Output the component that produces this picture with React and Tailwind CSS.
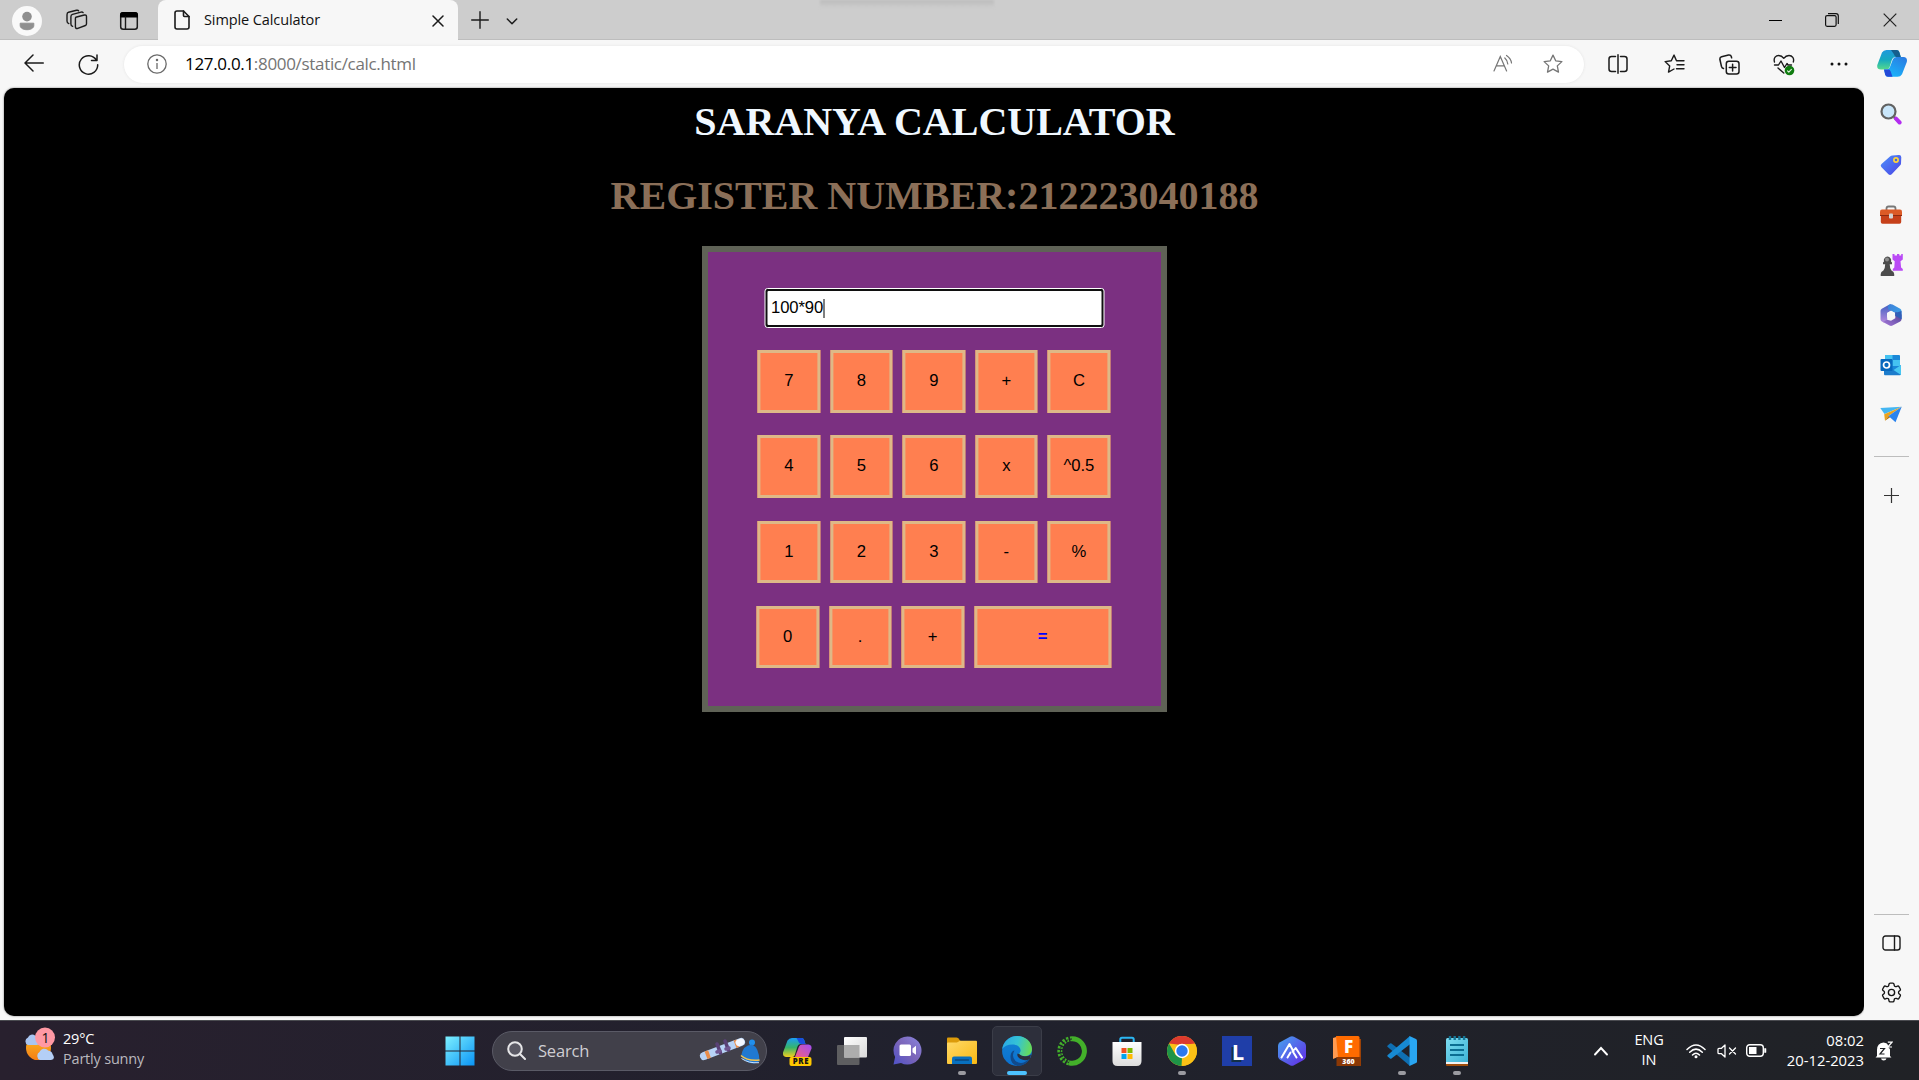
import React from "react";
import { HiOutlineCog6Tooth } from "react-icons/hi2";

const UI = "font-['Open_Sans','Noto_Sans',sans-serif]";

function Svg({ w, h, vb, className = "", children, ...rest }) {
  return (
    <svg width={w} height={h} viewBox={vb || `0 0 ${w} ${h}`} fill="none" className={`block shrink-0 ${className}`} {...rest}>
      {children}
    </svg>
  );
}

const line = { stroke: "#1b1b1b", strokeWidth: 1.4, strokeLinecap: "round", strokeLinejoin: "round" };

function Cell({ className, children }) {
  return <div className={`flex h-full shrink-0 items-center justify-center ${className}`}>{children}</div>;
}

function TabStrip() {
  return (
    <div className="flex h-10 w-full items-center bg-[#cdcdcd] shadow-[inset_0_-1px_0_#bdbdbd]">
      <Cell className="w-[54px]">
        <Svg w={30} h={30} className="mt-px">
          <circle cx="15" cy="15" r="15" fill="#f9f9f9" />
          <circle cx="15" cy="10.6" r="4.8" fill="#8f8f8f" />
          <path d="M8.2 17.2h13.6v2.3c0 2.6-3 4.2-6.8 4.2s-6.8-1.600-6.800-4.200z" fill="#8f8f8f" stroke="#8f8f8f" strokeLinejoin="round" />
        </Svg>
      </Cell>
      <Cell className="w-[46px]">
        <Svg w={22} h={22} {...line} strokeWidth="1.4" className="-ml-px">
          <path d="M9.800 8.200l8.500-2.200q2-.4 2.200 1.500v7.300q0 1.300-1.100 1.700l-7.600 2.900q-2.200.7-2.400-1.500v-8q0-1.300.4-1.700z" />
          <path d="M6.600 17.300q-1.700-.5-1.700-2.400V7.700q0-1.800 1.600-2.300l8.500-2.300q1.500-.3 2.100.5" />
          <path d="M2.800 14.600Q1 14 1 12V5.700q0-2 1.600-2.500L10.500 1.300q1.600-.4 2.100.5" />
        </Svg>
      </Cell>
      <Cell className="w-[58px]">
        <Svg w={20} h={20} className="mt-px">
          <rect x="1.700" y="1.700" width="16.600" height="16.600" rx="2.500" {...line} strokeWidth="1.500" />
          <path d="M1 6.500V4q0-3 3-3h12q3 0 3 3v2.500z" fill="#000" />
          <path d="M6.500 6v12" {...line} />
        </Svg>
      </Cell>
      <div className="flex h-10 w-[300px] items-center rounded-t-[8px] bg-[#f7f7f7] pl-4">
        <Svg w={16} h={20} {...line} strokeWidth="1.600">
          <path d="M3 1h6.500L15 6.500V17q0 2-2 2H3q-2 0-2-2V3q0-2 2-2z" />
          <path d="M9.500 1v4.500q0 1 1 1H15" />
        </Svg>
        <span className={`ml-[14px] w-[228px] whitespace-nowrap text-[14.500px] leading-5 tracking-[-0.1px] text-[#111] ${UI}`}>Simple Calculator</span>
        <Svg w={12} h={12} className="mt-px" {...line} strokeWidth="1.500">
          <path d="M1 1l10 10M11 1L1 11" />
        </Svg>
      </div>
      <Cell className="w-[43px]">
        <Svg w={18} h={18} {...line} strokeWidth="1.400">
          <path d="M9 .7v16.600M.7 9h16.600" />
        </Svg>
      </Cell>
      <Cell className="w-[21px]">
        <Svg w={12} h={7} className="mt-0.5" {...line} strokeWidth="1.500">
          <path d="M1.300 1L6 5.700 10.700 1" />
        </Svg>
      </Cell>
      <div className="flex h-full min-w-0 grow pl-[298px]">
        <div className="h-2 w-[174px] bg-linear-to-b from-[#bcbcbc] to-[#cdcdcd] blur-[1px]" />
      </div>
      <Cell className="w-[56px]">
        <div className="h-px w-[13px] bg-black" />
      </Cell>
      <Cell className="w-[58px]">
        <Svg w={14} h={14} stroke="#111" strokeWidth="1.200">
          <rect x=".6" y="2.600" width="10.500" height="10.700" rx="1.500" />
          <path d="M3 .6h8q2.300 0 2.300 2.300v8" />
        </Svg>
      </Cell>
      <Cell className="w-[58px]">
        <Svg w={14} h={14} stroke="#222" strokeWidth="1.200">
          <path d="M.7.7l12.600 12.600M13.300.7L.7 13.300" />
        </Svg>
      </Cell>
    </div>
  );
}

const starPath = "M10 1.100l2.700 5.700 6.200.8-4.600 4.300 1.200 6.200L10 15.100l-5.500 3 1.200-6.200L1.100 7.600l6.200-.8z";

function Toolbar() {
  return (
    <div className="flex h-12 w-full items-center bg-[#f7f7f7]">
      <Cell className="w-[68px]">
        <Svg w={20} h={18} {...line} strokeWidth="1.500" className="mt-[-2px]">
          <path d="M9 1L1 9l8 8M1.300 9H19.300" />
        </Svg>
      </Cell>
      <Cell className="w-[42px]">
        <Svg w={21} h={21} {...line} strokeWidth="1.500" className="-ml-px">
          <path d="M18.400 6.200A9.200 9.200 0 1 0 19.700 10.700M19 1v5.500h-5.500" />
        </Svg>
      </Cell>
      <div className="ml-[14px] flex h-[37px] w-[1460px] items-center rounded-full bg-white shadow-[0_0_3px_#e3e3e3]">
        <Cell className="w-[61px] pl-1">
          <Svg w={20} h={20} stroke="#6a6a6a" strokeWidth="1.300">
            <circle cx="10" cy="10" r="9.200" />
            <path d="M10 9v6" />
            <circle cx="10" cy="6" r="0.600" fill="#6a6a6a" />
          </Svg>
        </Cell>
        <span className={`w-[1289px] whitespace-nowrap text-[17px] leading-6 tracking-[-0.320px] text-[#747474] ${UI}`}>
          <span className="text-black">127.0.0.1</span>:8000/static/calc.html
        </span>
        <Cell className="w-[60px]">
          <Svg w={20} h={18} stroke="#757575" strokeWidth="1.200" strokeLinecap="round" className="ml-[-2px] mt-[-2px]">
            <path d="M1 17L7.300 2.500 13.600 17M3.400 11.800h7.900M11.800 4q2.700 2.300 3 6M13.500 1.500q4.500 3 5 7.500" />
          </Svg>
        </Cell>
        <Cell className="w-[38px]">
          <Svg w={20} h={20} stroke="#757575" strokeWidth="1.300" strokeLinejoin="round">
            <path d={starPath} />
          </Svg>
        </Cell>
      </div>
      <Cell className="ml-[6px] w-[56px]">
        <Svg w={20} h={20} {...line} strokeWidth="1.500">
          <path d="M7.500 2.500H3.500q-2.500 0-2.500 2.500v10q0 2.500 2.500 2.500h4M12.500 2.500h4q2.500 0 2.500 2.500v10q0 2.500-2.500 2.500h-4M10 .8v18.400" />
        </Svg>
      </Cell>
      <Cell className="w-[56px]">
        <Svg w={21} h={20} {...line} strokeWidth="1.400">
          <path d="M12.500 6.800l-2.500-5.700-2.700 5.700-6.200.8 4.600 4.300-1.200 6.200L10 15M12.500 6.800h7.500M13 10.800h7M12.500 14.800h7.500" />
        </Svg>
      </Cell>
      <Cell className="w-[54px]">
        <Svg w={21} h={21} {...line} strokeWidth="1.500">
          <rect x="7.300" y="7.300" width="12.700" height="12.700" rx="2.500" />
          <path d="M13.600 10.300v6.700M10.300 13.600h6.700M4.500 14.500q-1.500-.3-2-2L.9 5.500Q.6 3.400 2.600 2.800l6.900-1.700q2.300-.4 2.900 1.700l.2 1" />
        </Svg>
      </Cell>
      <Cell className="w-[56px]">
        <Svg w={22} h={22} {...line} strokeWidth="1.400" className="mt-px">
          <path d="M1.500 8C.2 3.800 3 1.500 5.700 1.500 8.500 1.500 10 3.200 10.800 4.300 11.600 3.200 13 1.500 16 1.500c3.200 0 5.500 3 4.300 6.500M1.500 11h4l2.500-4 3.500 6.500L14 9.500l1 1.500h3.500M5 14l5.800 5" />
          <circle cx="16.500" cy="16.500" r="4.800" fill="#107c10" stroke="none" />
          <path d="M14.500 16.800l1.300 1.300 2.600-2.800" stroke="#dff0df" strokeWidth="1.100" />
        </Svg>
      </Cell>
      <Cell className="w-[54px]">
        <Svg w={18} h={4}>
          <circle cx="2" cy="2" r="1.500" fill="#111" />
          <circle cx="9" cy="2" r="1.500" fill="#111" />
          <circle cx="16" cy="2" r="1.500" fill="#111" />
        </Svg>
      </Cell>
      <Cell className="w-[52px]">
        <Svg w={30} h={27} className="-mt-px">
          <defs>
            <linearGradient id="cpA" x1="0" y1="0" x2="0" y2="1">
              <stop stopColor="#1f98dc" /><stop offset=".5" stopColor="#16a9c0" /><stop offset="1" stopColor="#55d98c" />
            </linearGradient>
            <linearGradient id="cpB" x1="1" y1="0" x2=".3" y2="1">
              <stop stopColor="#2b78e0" /><stop offset="1" stopColor="#19b5fb" />
            </linearGradient>
          </defs>
          <path d="M5 2.500Q6.500 0 9.500 0h10q2.200 0 2.800 2l1.500 5h-5q-3 0-4 3l-2.300 7.500q-.8 2-2.800 2H4Q-.5 19.500.3 15z" fill="url(#cpA)" />
          <path d="M14 0h5.500q2.200 0 2.800 2l1.500 5h-4.500q-1.500 0-2.500-3z" fill="#155f8e" />
          <path d="M25 24.200q-1.500 2.500-4.500 2.500H11q-2.200 0-2.800-2L7 19.500h3q2 0 2.800-2l3-8q1-2.500 3.500-2.500H26.500q4.300.5 3.300 5z" fill="url(#cpB)" />
          <path d="M15.500 26.700H11q-2.200 0-2.800-2L7 19.500h4.500q1.500 0 2.200 2z" fill="#2349d8" />
        </Svg>
      </Cell>
    </div>
  );
}

function CalcKey({ children, wide, accent }) {
  return (
    <button
      type="button"
      className={`flex h-[62.5px] shrink-0 items-center justify-center border-[3px] border-[#deb887] bg-[#ff7f50] text-[16.67px] leading-none ${wide ? "w-[137.5px]" : "w-[62.5px]"} ${accent ? "font-bold text-[#0000ff]" : "text-black"}`}
    >
      {children}
    </button>
  );
}

function Page() {
  const rows = [
    ["7", "8", "9", "+", "C"],
    ["4", "5", "6", "x", "^0.5"],
    ["1", "2", "3", "-", "%"],
  ];
  return (
    <main className="ml-1 flex h-[928px] w-[1860px] shrink-0 flex-col items-center rounded-[10px] bg-black pt-[11px] pl-px shadow-[0_0_2px_#666]">
      <h1 className="h-[46px] font-['Liberation_Serif',serif] text-[40px] font-bold leading-[46px] text-[#f0f8ff]">SARANYA CALCULATOR</h1>
      <h1 className="mt-7 h-[46px] font-['Liberation_Serif',serif] text-[40px] font-bold leading-[46px] text-[#8b6f58]">REGISTER NUMBER:212223040188</h1>
      <section className="mt-[27px] flex h-[466px] w-[465px] flex-col items-center border-[6px] border-[#5f6256] bg-[#7b3081] pt-9 font-['Liberation_Sans',sans-serif]">
        <div className="flex h-10 w-[340px] -translate-x-[0.500px] items-center rounded-[3px] border border-white bg-[#101010] p-[2px]">
          <div className="flex h-full w-full items-center rounded-[1px] bg-white pl-1 text-[16.67px] tracking-[-0.1px] text-black">
            <span className="pb-0.5">100*90</span>
            <span className="h-[19px] w-px bg-black" />
          </div>
        </div>
        <div className="mt-[22px] flex w-[352.5px] -translate-x-[0.6px] flex-col gap-[22.8px]">
          {rows.map((r) => (
            <div key={r[0]} className="flex gap-[10px]">
              {r.map((k) => <CalcKey key={k}>{k}</CalcKey>)}
            </div>
          ))}
          <div className="-ml-[1.250px] flex gap-[10px]">
            <CalcKey>0</CalcKey>
            <CalcKey>.</CalcKey>
            <CalcKey>+</CalcKey>
            <CalcKey wide accent>=</CalcKey>
          </div>
        </div>
      </section>
    </main>
  );
}

function Sidebar() {
  return (
    <aside className="flex h-full w-[55px] flex-col items-center bg-[#f7f7f7] pr-px">
      <div className="flex h-[355px] flex-col items-center pt-px">
        <div className="flex h-[50px] items-center">
          <Svg w={22} h={22}>
            <path d="M14 14l2.500 2.500" stroke="#555" strokeWidth="2.500" />
            <path d="M16 15.700l3.600 3.800" stroke="#b32cf0" strokeWidth="4" strokeLinecap="round" />
            <circle cx="8.500" cy="8.500" r="7" fill="#c9e6fa" stroke="#626262" strokeWidth="2.200" />
          </Svg>
        </div>
        <div className="flex h-[51px] items-center">
          <Svg w={22} h={22}>
            <defs><linearGradient id="tg" x1="0" y1="0" x2="1" y2="1"><stop stopColor="#4d92fa" /><stop offset="1" stopColor="#4a42e6" /></linearGradient></defs>
            <path d="M12.500 1.500L19 1q2.200 0 2.300 2.200L21 9.500q0 1-.8 1.800l-8.500 8.900q-1.700 1.500-3.300 0L1.300 13q-1.300-1.500.2-3L10 2.400q1-.8 2.500-.9z" fill="url(#tg)" />
            <circle cx="16" cy="6" r="2.100" fill="#4469d8" stroke="#ffd43a" strokeWidth="1.700" />
          </Svg>
        </div>
        <div className="flex h-[50px] items-center">
          <Svg w={24} h={20}>
            <path d="M7.500 5V3.500q0-2 2-2h5q2 0 2 2V5" stroke="#777" strokeWidth="1.800" />
            <path d="M1 6.500Q1 4.500 3 4.500h18q2 0 2 2V11H1z" fill="#dc5a26" />
            <path d="M1.800 11h20.400v6q0 1.700-1.700 1.700h-17Q1.800 18.700 1.800 17z" fill="#c6401a" />
            <path d="M1 10.500h22" stroke="#8e2a10" strokeWidth="1" />
            <rect x="10" y="8.500" width="4" height="5" rx="1" fill="#d4d4d4" />
          </Svg>
        </div>
        <div className="flex h-[50px] items-center">
          <Svg w={23} h={24}>
            <path d="M12.500 1h2v1.500H17V1h2.300v1.500h1.900V1h1.600v5.500L20.500 8.200l.6 6.300 1.700 1.500v1.700h-10V16l1.500-1.500.4-6.300-2.200-1.700z" fill="#ba4af5" />
            <path d="M4 8.500a3.700 3.700 0 1 1 7 0l1 1v1.700h-2.300q0 4 1.800 6.300 2.700 1 2.700 3.500v2H.7v-2q0-2.500 2.700-3.500 1.800-2.300 1.800-6.300H3V9.500z" fill="#4c4c4c" />
            <circle cx="7" cy="6.500" r="2" fill="#8e8e8e" />
          </Svg>
        </div>
        <div className="flex h-[50px] items-center">
          <Svg w={22} h={22}>
            <defs>
              <linearGradient id="mA" x1="0" y1="0" x2="0" y2="1"><stop stopColor="#3f5fc0" /><stop offset="1" stopColor="#b58ade" /></linearGradient>
              <linearGradient id="mB" x1="0" y1="0" x2="1" y2="1"><stop stopColor="#3f7fd8" /><stop offset="1" stopColor="#38a8ea" /></linearGradient>
              <linearGradient id="mC" x1="0" y1="1" x2="1" y2="0"><stop stopColor="#a678d8" /><stop offset="1" stopColor="#4b3f94" /></linearGradient>
            </defs>
            <path d="M11 .2v6.500L7.200 9v7.500L3.500 18.500 1.800 17.500Q.5 16.700.5 15.200V6.800Q.5 5.500 1.800 4.700L9 .8z" fill="url(#mA)" />
            <path d="M9.500.6q1.500-.8 3 0l7.700 4.200q1.300.8 1.300 2.200v8.200l-6.200-3.500V9L8 5.200V1.500z" fill="url(#mB)" />
            <path d="M21.500 10.500v4.700q0 1.500-1.300 2.300l-7.700 4q-1.500.8-3 0L3 18l4-2.200 4 1 4.300-2.500V8z" fill="url(#mC)" />
            <path d="M21.500 7v8.200l-6.200-3.500V9z" fill="#2f5fb8" />
            <path d="M11 6.800l4 2.300v4.200l-4 2.400-4-2.400V9.100z" fill="#f7f7f7" />
          </Svg>
        </div>
        <div className="flex h-[50px] items-center">
          <Svg w={22} h={22}>
            <rect x="5" y="1" width="15" height="18" rx="1" fill="#1b88d8" />
            <path d="M5 1h7.500v5H5zM12.500 6H20v6h-7.500z" fill="#45c2f1" />
            <path d="M4 12l9 4 8-5v9q0 1.200-1.200 1.200H5Q4 21.200 4 20z" fill="#1c7ccc" />
            <path d="M21 11v10L13.500 16z" fill="#48c7f2" />
            <rect x=".5" y="5" width="12" height="12" rx="1" fill="#0869be" />
            <circle cx="6.500" cy="11" r="3" stroke="#fff" strokeWidth="1.700" />
          </Svg>
        </div>
        <div className="flex h-[50px] items-center">
          <Svg w={22} h={18}>
            <path d="M.3 2L21.700.8 4.500 8z" fill="#45b6f2" />
            <path d="M4.200 8.200L21.700.8 8.500 10 5 14.800z" fill="#eba31e" />
            <path d="M5 14.800l3.500-4.800L10.500 11z" fill="#b9750f" />
            <path d="M21.700.8L15.500 16.200 8.500 10z" fill="#2a83ee" />
          </Svg>
        </div>
      </div>
      <div className="mt-[12.500px] h-px w-[35px] shrink-0 bg-[#bdbdbd]" />
      <Svg w={15} h={15} className="mt-[31.5px]" stroke="#333" strokeWidth="1.200"><path d="M7.500 0v15M0 7.500h15" /></Svg>
      <div className="grow" />
      <div className="h-px w-[35px] shrink-0 bg-[#bdbdbd]" />
      <Svg w={19} h={16} className="mt-5" {...line} strokeWidth="1.400">
        <rect x="1" y="1" width="17" height="14" rx="2.500" /><path d="M12.500 1v14" />
      </Svg>
      <HiOutlineCog6Tooth className="mt-[29px] mb-[15px] size-[25px] shrink-0 text-[#151515]" strokeWidth={1.300} />
    </aside>
  );
}

function TaskIcon({ children, running, active }) {
  return (
    <div className="flex h-full w-[55px] shrink-0 items-center justify-center">
      <div className={`flex h-[50px] w-[50px] flex-col items-center rounded-[5px] border pt-[9px] ${active ? "border-[#3b3d48] bg-[#2d2f3b]" : "border-transparent"}`}>
        <div className="flex h-[30px] items-center">{children}</div>
        <div className={`mt-[5px] h-1 rounded-full ${active ? "w-5 bg-[#4cc2ff]" : running ? "w-2 bg-[#9b9ba1]" : "w-2"}`} />
      </div>
    </div>
  );
}

function Taskbar() {
  return (
    <footer className={`flex h-[60px] w-full items-center border-t border-[#4a4b50] bg-linear-to-r from-[#28202e] via-[#20212d] to-[#202226] ${UI}`}>
      <div className="flex h-full w-[432.500px] shrink-0 pl-6">
        <Svg w={32} h={34} className="mt-[5px] -ml-px">
          <defs><linearGradient id="sun" x1="0" y1="0" x2="0" y2="1"><stop stopColor="#fbbb26" /><stop offset="1" stopColor="#f57c14" /></linearGradient></defs>
          <circle cx="15.500" cy="22" r="12.500" fill="url(#sun)" />
          <path d="M5 19a4 4 0 0 1 0-7.500A4.500 4.500 0 0 1 12 9.500q4 .5 4.500 4 3 5-3 5.500z" fill="#a9c6f2" />
          <path d="M17 34a4.500 4.500 0 0 1-.5-8A5 5 0 0 1 25 24.500q4 .5 4.500 3.500 3.500 5-1.500 6z" fill="#b4cff6" />
          <circle cx="22" cy="11.500" r="10" fill="#ff99a4" />
          <text x="22.500" y="16.500" textAnchor="middle" fontSize="14" fill="#111" fontFamily="Open Sans">1</text>
        </Svg>
        <div className="ml-2 mt-[8px] text-[14.500px] leading-5 tracking-[-0.2px]">
          <div className="text-white">29°C</div>
          <div className="text-[#bab8be]">Partly sunny</div>
        </div>
      </div>
      <TaskIcon>
        <Svg w={30} h={30}>
          <defs><linearGradient id="win" x1="0" y1="0" x2="1" y2="1"><stop stopColor="#7df0ff" /><stop offset="1" stopColor="#0a94f5" /></linearGradient></defs>
          <path d="M.5 .5h14v14H.5zM15.500 .5h14v14h-14zM.5 15.500h14v14H.5zM15.500 15.500h14v14h-14z" fill="url(#win)" />
        </Svg>
      </TaskIcon>
      <div className="ml-[4.500px] mr-[2.500px] flex h-10 w-[275px] shrink-0 items-center rounded-full border border-[#5a5a66] bg-[#41404a] pl-[14px]">
        <Svg w={19} h={19} stroke="#e6e6e8" strokeWidth="2" strokeLinecap="round">
          <circle cx="8" cy="8" r="6.800" fill="#5a5964" /><path d="M13 13l5 5" />
        </Svg>
        <span className="ml-[12px] w-[161px] text-[16.500px] leading-6 tracking-[-0.2px] text-[#cfced2]">Search</span>
        <Svg w={62} h={30}>
          <path d="M5 20L42 6" stroke="#b7d3f6" strokeWidth="8" strokeLinecap="round" />
          <path d="M7 19.200l3.500-1.300M36 8.300l3-1.100" stroke="#e98d4a" strokeWidth="8" />
          <path d="M40 6.700l2-.7" stroke="#f3f7ff" strokeWidth="7" strokeLinecap="round" />
          <path d="M18 8l3.500 9M26 5l3.500 9" stroke="#594176" strokeWidth="3.500" strokeLinecap="round" />
          <path d="M18 16l3-1M27 13l3-1" stroke="#6e5590" strokeWidth="3.500" strokeLinecap="round" />
          <circle cx="53" cy="6.500" r="3" fill="#2190ee" />
          <path d="M42 20Q44 9 53 8.500q7 3 7.500 16.500-3 3-8 2.300-6-1-10.500-7.300z" fill="#2079d2" />
          <path d="M42 19.500q7 6 18.500 4.500" stroke="#f5c34c" strokeWidth="1.500" />
          <path d="M42.500 22.500q7 5 17.500 4.200" stroke="#cfe5ff" strokeWidth="1" />
        </Svg>
      </div>
      <TaskIcon>
        <Svg w={30} h={30}>
          <defs>
            <linearGradient id="c1" x1="0" y1="0" x2="0" y2="1"><stop stopColor="#1b9cf5" /><stop offset=".5" stopColor="#36b56b" /><stop offset="1" stopColor="#f4ce1d" /></linearGradient>
            <linearGradient id="c2" x1="1" y1="0" x2="0" y2="1"><stop stopColor="#a14cf2" /><stop offset="1" stopColor="#f2607f" /></linearGradient>
          </defs>
          <path d="M5.500 4.500Q7 2 10 2h9.500q2 0 2.700 2l1.300 4h-4.500q-2.800 0-3.700 3l-2.500 8q-.6 2-2.500 2H4Q.5 20.500 1 16.500z" fill="url(#c1)" />
          <path d="M14.500 2h5q2 0 2.700 2l1.300 4h-4q-2.500 0-3.300-3z" fill="#174ede" />
          <path d="M13 21l4-10.500Q18 8.500 20 8.500h6.500q3.500.5 3 4L26 21z" fill="url(#c2)" />
          <rect x="7.500" y="21" width="22" height="9" rx="2" fill="#ffc800" />
          <text x="19" y="28.300" textAnchor="middle" fontSize="7.800" letterSpacing=".7" fontWeight="800" fill="#151515" fontFamily="Open Sans">PRE</text>
        </Svg>
      </TaskIcon>
      <TaskIcon>
        <Svg w={30} h={28}>
          <defs><linearGradient id="tv" x1="0" y1="0" x2="1" y2="1"><stop stopColor="#fff" /><stop offset="1" stopColor="#d9d9d9" /></linearGradient></defs>
          <rect x="0" y="8" width="22.500" height="20" rx="1" fill="#5e5e60" />
          <rect x="7" y="0" width="23" height="20.500" rx="1" fill="url(#tv)" />
          <path d="M7 8h15.500v12.500H7z" fill="#adadad" />
        </Svg>
      </TaskIcon>
      <TaskIcon>
        <Svg w={29} h={29}>
          <defs><linearGradient id="ch" x1="1" y1="0" x2="0" y2="1"><stop stopColor="#8a86e0" /><stop offset=".5" stopColor="#7b65b8" /><stop offset="1" stopColor="#4f52c9" /></linearGradient></defs>
          <path d="M14.500.5a14 14 0 1 1-6.500 26.400L.5 28.500l1.600-7.500A14 14 0 0 1 14.500.5z" fill="url(#ch)" />
          <rect x="6.500" y="8.500" width="11.500" height="11.500" rx="1.500" fill="#fff" />
          <path d="M19.500 12.500l3.500-2.700v9l-3.500-2.600z" fill="#fff" />
        </Svg>
      </TaskIcon>
      <TaskIcon running>
        <Svg w={30} h={27}>
          <defs><linearGradient id="fo" x1="0" y1="0" x2="1" y2="1"><stop stopColor="#ffd968" /><stop offset="1" stopColor="#f9b913" /></linearGradient></defs>
          <path d="M0 1.500Q0 .5 1 .5h8.500q1 0 1.700.8L13.500 4v5H0z" fill="#dc9b0a" />
          <path d="M0 6.500q0-1 1-1h9l3-1.700h16q1 0 1 1V26q0 1-1 1H1q-1 0-1-1z" fill="url(#fo)" />
          <path d="M5 27v-5.500q0-2 2-2h16q2 0 2 2V27z" fill="#0870bf" />
          <path d="M8.500 23h13" stroke="#0b477d" strokeWidth="1.500" strokeLinecap="round" />
        </Svg>
      </TaskIcon>
      <TaskIcon active>
        <Svg w={30} h={30}>
          <defs>
            <linearGradient id="e1" x1="0" y1=".3" x2="1" y2=".5"><stop stopColor="#2aa8e5" /><stop offset=".5" stopColor="#35c3d5" /><stop offset="1" stopColor="#68dc56" /></linearGradient>
            <linearGradient id="e2" x1="0" y1="0" x2="0" y2="1"><stop stopColor="#1383d3" /><stop offset="1" stopColor="#0b70cf" /></linearGradient>
          </defs>
          <circle cx="15" cy="15" r="14.900" fill="url(#e2)" />
          <path d="M12.500 14.500q-3.500 6 1 10.500 6.500 5 14.400-2.700Q24 30 15.500 29.900 8 28 8.500 20q.5-5 4-5.500z" fill="#114a8b" />
          <path d="M.2 13C1.500 5.500 7.300 0 15 0c8.500 0 15 5.700 15 13 0 4.800-3.700 7.300-7.500 7.300-3.500 0-5.500-1.300-5.500-2.300 0-.8 1.800-1.300 1.600-3.800C18.300 10.500 14.500 8.500 10.500 8.500 5.500 8.500 2 10.500.2 13z" fill="url(#e1)" />
          <path d="M29 18.500q-4 2.700-8 1.500-3.800-1.200-3.700-2.500-.8.800-1.800 0-1 2.800 2.500 5.200 5 2.800 9.800.3z" fill="#2d2f3b" />
        </Svg>
      </TaskIcon>
      <TaskIcon>
        <Svg w={30} h={30}>
          <path d="M15 2.700a12.300 12.300 0 1 1-3 24.200" stroke="#43b02a" strokeWidth="5" />
          <path d="M12 26.900A12.300 12.300 0 0 1 15 2.700" stroke="#43b02a" strokeWidth="5" strokeDasharray="2.200 1.500" />
          <path d="M12 26.500A12 12 0 0 1 15 3" stroke="#20212d" strokeWidth="1" strokeDasharray="3 1.500" />
        </Svg>
      </TaskIcon>
      <TaskIcon>
        <Svg w={30} h={30}>
          <defs><linearGradient id="st" x1="0" y1="0" x2="0" y2="1"><stop stopColor="#fff" /><stop offset="1" stopColor="#dcdcdc" /></linearGradient></defs>
          <path d="M8.300 7V3.500q0-1.700 1.700-1.700h10q1.700 0 1.700 1.700V7" stroke="#2bb7f3" strokeWidth="2" />
          <path d="M.5 6h29v19q0 5-5 5h-19q-5 0-5-5z" fill="url(#st)" />
          <path d="M9.500 12h5v5h-5z" fill="#f25022" /><path d="M15.500 12h5v5h-5z" fill="#7fba00" />
          <path d="M9.500 18h5v5h-5z" fill="#00a4ef" /><path d="M15.500 18h5v5h-5z" fill="#ffb900" />
        </Svg>
      </TaskIcon>
      <TaskIcon running>
        <Svg w={30} h={30}>
          <circle cx="15" cy="15" r="15" fill="#fbc116" />
          <path d="M2 7.500A15 15 0 0 1 28 7.500L15 9z" fill="#dc3a2e" />
          <path d="M2 7.500l6.500 11.300L15 22l-.5 8A15 15 0 0 1 2 7.500z" fill="#1e9447" />
          <path d="M15 8h13.200A15 15 0 0 1 15 30l6-11z" fill="#fbc116" />
          <circle cx="15" cy="15" r="7.200" fill="#fff" /><circle cx="15" cy="15" r="5.700" fill="#2b78ee" />
        </Svg>
      </TaskIcon>
      <TaskIcon>
        <div className="flex size-[30px] items-center justify-center bg-[#1f3ea8] pl-0.5 text-[22px] font-bold leading-none text-white [text-shadow:-2px_2px_0_#123048]">L</div>
      </TaskIcon>
      <TaskIcon>
        <Svg w={28} h={30}>
          <defs><linearGradient id="hx" x1="0" y1="0" x2="1" y2="1"><stop stopColor="#45a4ee" /><stop offset="1" stopColor="#6527e6" /></linearGradient></defs>
          <path d="M12 .7q2-1 4 0l10 5.500q2 1.200 2 3.500v10.600q0 2.300-2 3.500l-10 5.500q-2 1-4 0L2 23.800q-2-1.200-2-3.500V9.700Q0 7.400 2 6.200z" fill="url(#hx)" />
          <path d="M3.500 21.500L11.500 8l4 7.500M9.500 21.500l3-5M14.500 15l4 6.500M16.500 13.500l1.200-1.500 6.300 9.500" stroke="#fff" strokeWidth="2" strokeLinecap="round" strokeLinejoin="round" />
        </Svg>
      </TaskIcon>
      <TaskIcon>
        <Svg w={28} h={30}>
          <path d="M5 3h23v27H5z" fill="#9b4107" />
          <path d="M0 2l5-1.500V21L0 23z" fill="#ff9a50" />
          <path d="M3 0h22q1.500 0 1.500 1.500V21H5z" fill="#ff6b00" />
          <path d="M3.500 21h24v9h-24z" fill="#8b3805" />
          <text x="15.500" y="16.500" textAnchor="middle" fontSize="17" fontWeight="800" fill="#fff" fontFamily="Open Sans">F</text>
          <text x="15.500" y="27.700" textAnchor="middle" fontSize="7" fontWeight="800" fill="#fff" fontFamily="Open Sans">360</text>
        </Svg>
      </TaskIcon>
      <TaskIcon running>
        <Svg w={30} h={30}>
          <path d="M.7 9.500L3 7.500q.8-.5 1.500 0L23 21.800V30L.7 11q-.8-.8 0-1.500z" fill="#0f6fb2" />
          <path d="M.7 20.500L3 22.500q.8.500 1.500 0L23 8.200V0L.7 19q-.8.800 0 1.500z" fill="#178ad3" />
          <path d="M22.500 0l6.500 3q1 .5 1 1.500v21q0 1-1 1.500l-6.500 3V0z" fill="#29a6f2" />
        </Svg>
      </TaskIcon>
      <TaskIcon running>
        <Svg w={22} h={30}>
          <defs><linearGradient id="np" x1="0" y1="0" x2="1" y2="1"><stop stopColor="#7ddcf0" /><stop offset="1" stopColor="#3eb3d6" /></linearGradient></defs>
          <path d="M0 24h22v6H1q-1 0-1-1z" fill="#a04e0c" />
          <path d="M0 24h22v4H0z" fill="#f2f2f2" />
          <path d="M0 3.500Q0 2 1.500 2h19Q22 2 22 3.500V26H0z" fill="url(#np)" />
          <path d="M4 0v4M8.700 0v4M13.400 0v4M18.100 0v4" stroke="#157696" strokeWidth="2.400" />
          <path d="M4 9h14M4 14h14M4 19h14" stroke="#0b6d92" strokeWidth="1.800" />
        </Svg>
      </TaskIcon>
      <div className="flex h-full min-w-0 grow items-center justify-end">
        <Cell className="w-[20px]">
          <Svg w={14} h={10} stroke="#fff" strokeWidth="1.900" strokeLinecap="round"><path d="M1 8.500L7 2l6 6.500" /></Svg>
        </Cell>
        <div className="w-[76px] pb-px text-center text-[14.500px] leading-5 tracking-[-0.100px] text-white"><div>ENG</div><div>IN</div></div>
        <Cell className="-ml-[7px] w-[32px]">
          <Svg w={20} h={16} stroke="#fff" strokeWidth="1.500" strokeLinecap="round">
            <path d="M1 6.500q9-9 18 0M3.700 9.300q6.300-6.300 12.600 0M6.500 12q3.500-3.500 7 0" /><circle cx="10" cy="13.700" r="1.500" fill="#fff" stroke="none" />
          </Svg>
        </Cell>
        <Cell className="w-[29px]">
          <Svg w={20} h={14} stroke="#fff" strokeWidth="1.300" strokeLinejoin="round" strokeLinecap="round">
            <path d="M8 1L4.500 4.300H2q-1 0-1 1v3.400q0 1 1 1h2.500L8 13zM12.500 4l6 6M18.500 4l-6 6" />
          </Svg>
        </Cell>
        <Cell className="w-[31px]">
          <Svg w={21} h={13}>
            <rect x=".7" y=".7" width="16.600" height="11.600" rx="3" stroke="#fff" strokeWidth="1.400" /><path d="M3 3h7.500v7H3z" fill="#fff" /><path d="M18.500 4.500h1.500v4h-1.500z" fill="#fff" stroke="#fff" strokeWidth=".5" />
          </Svg>
        </Cell>
        <div className="w-[92px] pb-px text-right text-[14.800px] leading-5 tracking-[0px] text-white"><div>08:02</div><div>20-12-2023</div></div>
        <Svg w={18} h={20} className="ml-[11px] mr-[26px]">
          <path d="M2 15V9q0-7 6.500-7.500Q15 2 15 9v6l1.500 1.500H.500z" fill="#fff" />
          <path d="M6 17.500h5.500q-.5 2-2.800 2T6 17.500z" fill="#fff" />
          <path d="M5 7.500h4.500l-4.500 5.500H9.500" stroke="#202226" strokeWidth="1.200" />
          <path d="M11.500 0H18v7.500h-4z" fill="#202226" />
          <path d="M12.800 1.200H17L12.800 6H17" stroke="#fff" strokeWidth="1.200" />
        </Svg>
      </div>
    </footer>
  );
}

export default function App() {
  return (
    <div className="flex h-[1080px] w-[1919px] flex-col overflow-hidden bg-[#f7f7f7]">
      <TabStrip />
      <Toolbar />
      <div className="flex h-[932px] w-full shrink-0">
        <Page />
        <Sidebar />
      </div>
      <Taskbar />
    </div>
  );
}
